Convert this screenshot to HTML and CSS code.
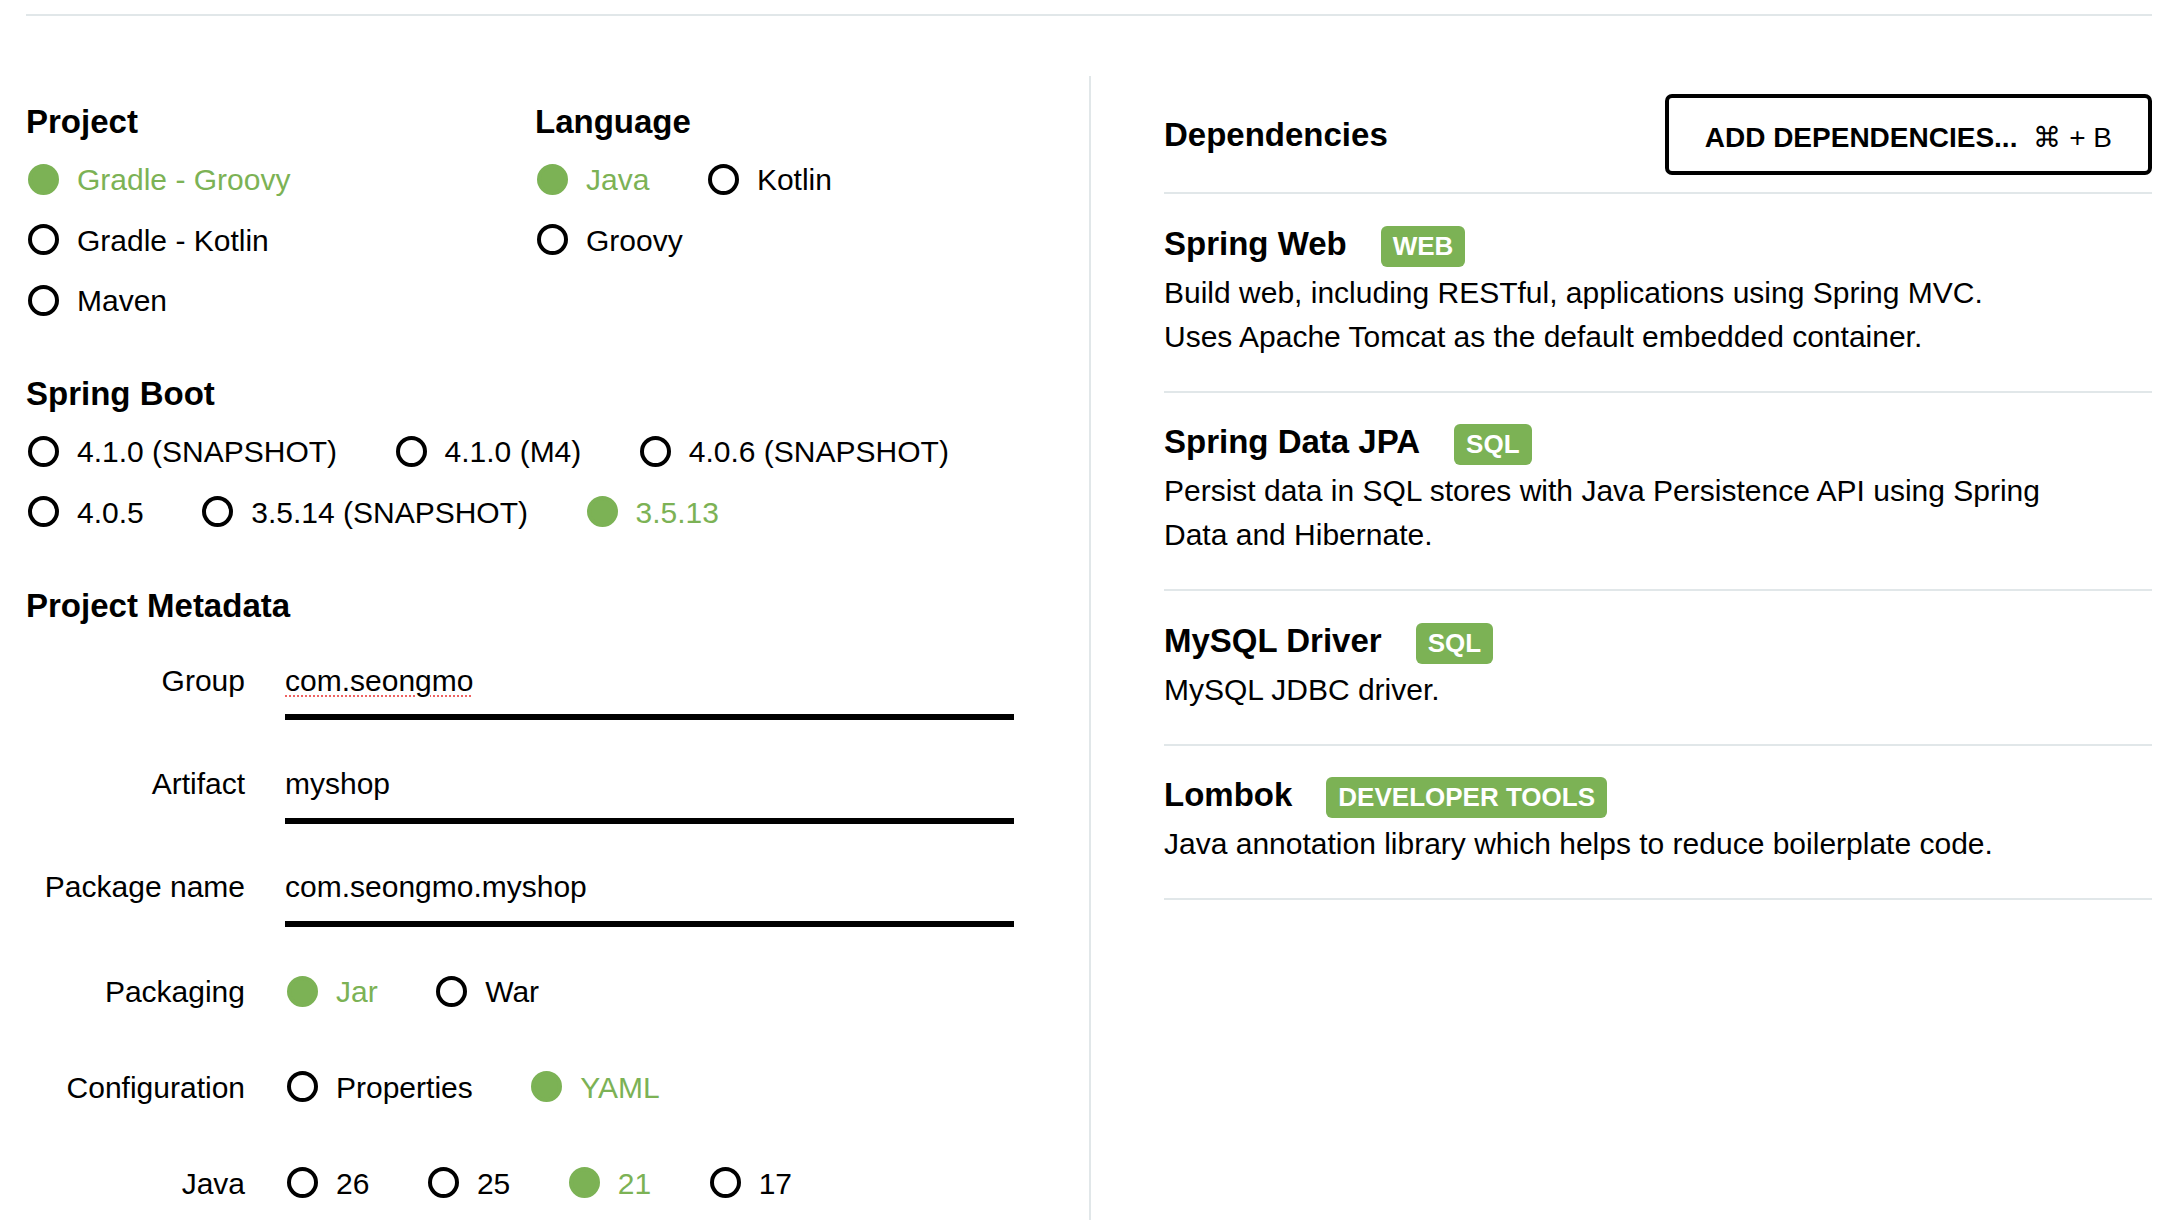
FILE: index.html
```html
<!DOCTYPE html>
<html lang="en">
<head>
<meta charset="utf-8">
<title>Spring Initializr</title>
<link rel="stylesheet" href="styles.css">
</head>
<body>
<div class="page">
  <div class="top-rule"></div>
  <div class="main">
    <div class="col-left">
      <div class="sec-pair">
        <section class="sec sec-project">
          <h2>Project</h2>
          <div class="opts">
            <div class="opt-row"><div class="opt sel"><span class="dot"></span><span>Gradle - Groovy</span></div></div>
            <div class="opt-row"><div class="opt"><span class="dot"></span><span>Gradle - Kotlin</span></div></div>
            <div class="opt-row"><div class="opt"><span class="dot"></span><span>Maven</span></div></div>
          </div>
        </section>
        <section class="sec sec-language">
          <h2>Language</h2>
          <div class="opts">
            <div class="opt-row">
              <div class="opt sel"><span class="dot"></span><span>Java</span></div>
              <div class="opt"><span class="dot"></span><span>Kotlin</span></div>
            </div>
            <div class="opt-row"><div class="opt"><span class="dot"></span><span>Groovy</span></div></div>
          </div>
        </section>
      </div>

      <section class="sec sec-boot">
        <h2>Spring Boot</h2>
        <div class="opts">
          <div class="opt-row">
            <div class="opt"><span class="dot"></span><span>4.1.0 (SNAPSHOT)</span></div>
            <div class="opt"><span class="dot"></span><span>4.1.0 (M4)</span></div>
            <div class="opt"><span class="dot"></span><span>4.0.6 (SNAPSHOT)</span></div>
          </div>
          <div class="opt-row">
            <div class="opt"><span class="dot"></span><span>4.0.5</span></div>
            <div class="opt"><span class="dot"></span><span>3.5.14 (SNAPSHOT)</span></div>
            <div class="opt sel"><span class="dot"></span><span>3.5.13</span></div>
          </div>
        </div>
      </section>

      <section class="sec sec-meta">
        <h2>Project Metadata</h2>
        <div class="meta-row input-row">
          <div class="meta-label">Group</div>
          <div class="meta-input"><span class="spell">com.seongmo</span></div>
        </div>
        <div class="meta-row input-row">
          <div class="meta-label">Artifact</div>
          <div class="meta-input">myshop</div>
        </div>
        <div class="meta-row input-row input-last">
          <div class="meta-label">Package name</div>
          <div class="meta-input">com.seongmo.myshop</div>
        </div>
        <div class="meta-row radio-row">
          <div class="meta-label">Packaging</div>
          <div class="opt-row">
            <div class="opt sel"><span class="dot"></span><span>Jar</span></div>
            <div class="opt"><span class="dot"></span><span>War</span></div>
          </div>
        </div>
        <div class="meta-row radio-row">
          <div class="meta-label">Configuration</div>
          <div class="opt-row">
            <div class="opt"><span class="dot"></span><span>Properties</span></div>
            <div class="opt sel"><span class="dot"></span><span>YAML</span></div>
          </div>
        </div>
        <div class="meta-row radio-row">
          <div class="meta-label">Java</div>
          <div class="opt-row">
            <div class="opt"><span class="dot"></span><span>26</span></div>
            <div class="opt"><span class="dot"></span><span>25</span></div>
            <div class="opt sel"><span class="dot"></span><span>21</span></div>
            <div class="opt"><span class="dot"></span><span>17</span></div>
          </div>
        </div>
      </section>
    </div>

    <div class="col-right">
      <div class="deps-head">
        <h2>Dependencies</h2>
        <button class="add-btn" type="button"><span class="btn-label">ADD DEPENDENCIES...</span><span class="btn-kbd">⌘ + B</span></button>
      </div>
      <div class="dep">
        <div class="dep-title">Spring Web<span class="badge">WEB</span></div>
        <div class="dep-desc">Build web, including RESTful, applications using Spring MVC. Uses Apache Tomcat as the default embedded container.</div>
      </div>
      <div class="dep">
        <div class="dep-title">Spring Data JPA<span class="badge">SQL</span></div>
        <div class="dep-desc">Persist data in SQL stores with Java Persistence API using Spring Data and Hibernate.</div>
      </div>
      <div class="dep">
        <div class="dep-title">MySQL Driver<span class="badge">SQL</span></div>
        <div class="dep-desc">MySQL JDBC driver.</div>
      </div>
      <div class="dep">
        <div class="dep-title">Lombok<span class="badge">DEVELOPER TOOLS</span></div>
        <div class="dep-desc">Java annotation library which helps to reduce boilerplate code.</div>
      </div>
    </div>
  </div>
</div>
</body>
</html>
```

FILE: styles.css
```css
html, body {
  margin: 0;
  padding: 0;
}

body {
  width: 2180px;
  height: 1220px;
  overflow: hidden;
  background: #ffffff;
  color: #000000;
  font-family: "Liberation Sans", Arial, Helvetica, sans-serif;
  font-size: 30px;
}

.page {
  margin: 0 28px 0 26px;
}

.top-rule {
  margin-top: 14px;
  border-top: 2px solid #e1e7e9;
}

.main {
  display: grid;
  grid-template-columns: 1063px 1063px;
  margin-top: 60px;
  height: 1144px;
}

.col-left {
  padding: 25.8px 75px 0 0;
}

.col-right {
  border-left: 2px solid #e1e7e9;
  padding: 18px 0 0 73px;
}

h2 {
  margin: 0;
  font-size: 33px;
  font-weight: 700;
  line-height: 40px;
}

.sec-pair {
  display: flex;
  margin-bottom: 50.5px;
}

.sec-project {
  width: 509px;
}

.sec-boot {
  margin-bottom: 51.5px;
}

.sec h2 {
  margin-bottom: 16.5px;
}

.sec-meta h2 {
  margin-bottom: 32.8px;
}

.opts {
  display: flex;
  flex-direction: column;
  row-gap: 16.5px;
}

.opt-row {
  display: flex;
  column-gap: 56.5px;
}

.opt {
  display: flex;
  align-items: center;
  column-gap: 18px;
  height: 44px;
  line-height: 44px;
  white-space: nowrap;
}

.dot {
  flex: none;
  width: 31px;
  height: 31px;
  box-sizing: border-box;
  border: 4px solid #000000;
  border-radius: 50%;
  margin-left: 2px;
  margin-bottom: 2px;
}

.opt.sel {
  color: #7cb255;
}

.opt.sel .dot {
  border-color: #7cb255;
  background: #7cb255;
}

.meta-row {
  display: flex;
  column-gap: 40px;
}

.meta-label {
  flex: none;
  width: 219px;
  text-align: right;
  line-height: 44px;
  white-space: nowrap;
}

.meta-input {
  flex: 1;
  line-height: 44px;
  padding-bottom: 11.4px;
  border-bottom: 6px solid #000000;
}

.input-row {
  margin-bottom: 41.7px;
}

.input-row.input-last {
  margin-bottom: 43.5px;
}

.radio-row {
  margin-bottom: 51.8px;
}

.spell {
  text-decoration: underline dotted #ee6262;
  text-decoration-thickness: 2px;
  text-underline-offset: 4px;
}

.deps-head {
  display: flex;
  justify-content: space-between;
  align-items: center;
  padding-bottom: 17px;
  border-bottom: 2px solid #e1e7e9;
}

.add-btn {
  display: flex;
  column-gap: 16px;
  margin: 0;
  border: 4px solid #000000;
  border-radius: 7px;
  padding: 22px 36px 15px;
  background: #ffffff;
  color: #000000;
  font-family: "Liberation Sans", Arial, Helvetica, sans-serif;
  font-size: 28px;
  line-height: 36px;
  white-space: nowrap;
}

.btn-label {
  font-weight: 700;
}

.btn-kbd {
  font-weight: 400;
}

.dep {
  padding: 22.5px 0 32px;
  border-bottom: 2px solid #e1e7e9;
}

.dep-title {
  font-size: 33px;
  font-weight: 700;
  line-height: 54px;
  white-space: nowrap;
}

.badge {
  display: inline-block;
  margin-left: 34px;
  padding: 6px 12px;
  border-radius: 6px;
  background: #7cb255;
  color: #ffffff;
  font-size: 26px;
  font-weight: 700;
  line-height: 29px;
  vertical-align: baseline;
}

.dep-desc {
  max-width: 885px;
  line-height: 44px;
}
```
